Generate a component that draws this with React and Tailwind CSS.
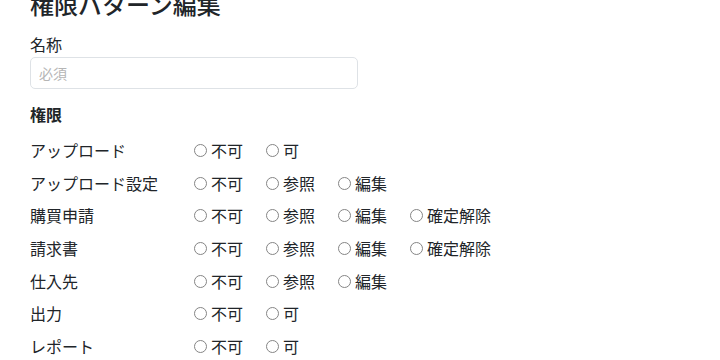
import React, { useState } from "react";

const permissions = [
  { key: "upload", label: "アップロード", options: ["不可", "可"] },
  { key: "uploadSetting", label: "アップロード設定", options: ["不可", "参照", "編集"] },
  { key: "purchase", label: "購買申請", options: ["不可", "参照", "編集", "確定解除"] },
  { key: "invoice", label: "請求書", options: ["不可", "参照", "編集", "確定解除"] },
  { key: "supplier", label: "仕入先", options: ["不可", "参照", "編集"] },
  { key: "output", label: "出力", options: ["不可", "可"] },
  { key: "report", label: "レポート", options: ["不可", "可"] },
];

const App = () => {
  const [name, setName] = useState("");
  const [values, setValues] = useState({});

  const handleChange = (key, option) => {
    setValues((prev) => ({ ...prev, [key]: option }));
  };

  return (
    <div
      className="w-[720px] h-[360px] overflow-hidden bg-white text-[#212529] px-[30px]"
      style={{ fontFamily: '"Noto Sans CJK JP", "Noto Sans", sans-serif' }}
    >
      <h4 className="text-[24px] leading-[1.2] font-medium mt-[-10px] mb-[13px]">
        権限パターン編集
      </h4>

      <div className="mb-[13px]">
        <label className="block text-[16px] leading-[24px] mb-[1px]">名称</label>
        <input
          type="text"
          value={name}
          onChange={(e) => setName(e.target.value)}
          placeholder="必須"
          className="block w-[328px] h-[32px] px-[8px] text-[14px] border border-[#dee2e6] rounded-[5px] outline-none placeholder:text-[#b5b5b5]"
        />
      </div>

      <div className="text-[16px] leading-[24px] font-bold mb-[8px]">権限</div>

      {permissions.map((perm) => (
        <div key={perm.key} className="flex items-center h-[32.67px] text-[16px]">
          <span className="w-[164px] shrink-0">{perm.label}</span>
          <div className="flex items-center">
            {perm.options.map((option) => (
              <label key={option} className="flex items-center w-[72px] gap-[4px] cursor-pointer">
                <input
                  type="radio"
                  name={perm.key}
                  checked={values[perm.key] === option}
                  onChange={() => handleChange(perm.key, option)}
                  className="appearance-none m-0 mt-[1px] shrink-0 w-[13px] h-[13px] rounded-full border border-[#858585] bg-white checked:border-[4px] checked:border-[#0d6efd]"
                />
                <span className="whitespace-nowrap">{option}</span>
              </label>
            ))}
          </div>
        </div>
      ))}
    </div>
  );
};

export default App;
